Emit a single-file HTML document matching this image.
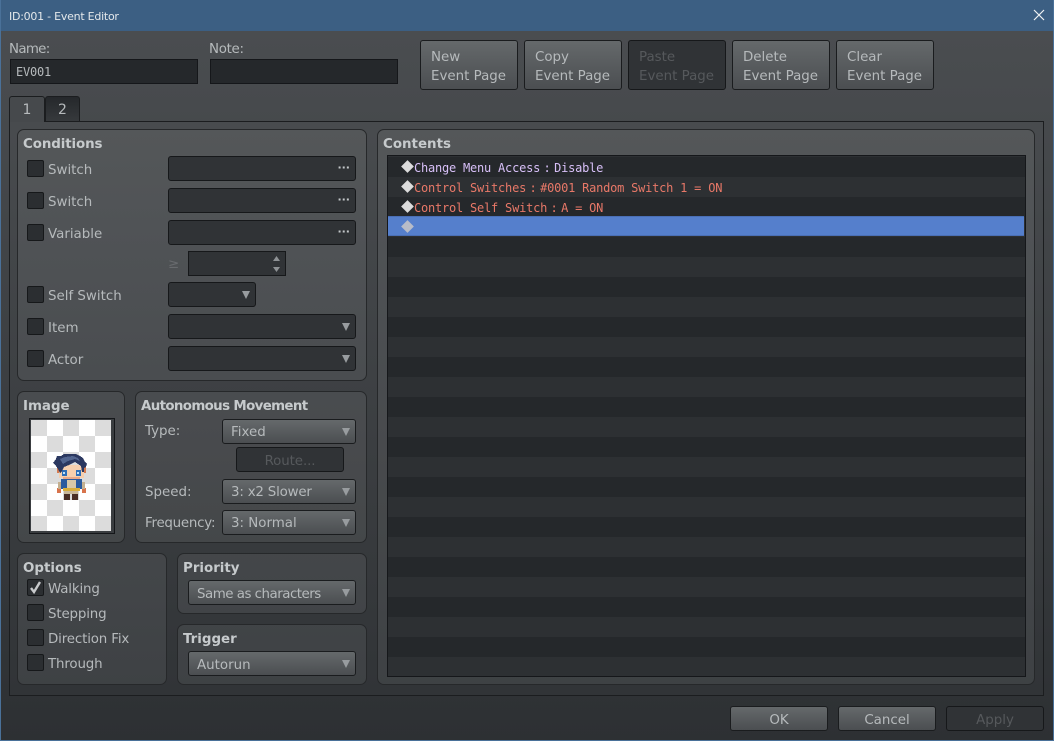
<!DOCTYPE html>
<html><head><meta charset="utf-8"><style>
html,body{margin:0;padding:0;width:1054px;height:741px;overflow:hidden;background:#2d3033}
*{box-sizing:border-box}
body{font-family:"DejaVu Sans","Liberation Sans",sans-serif;font-size:13.4px;color:#b6babc}
#w{position:absolute;left:0;top:0;width:1054px;height:741px;border:1px solid #4a7199;border-top:0;background:linear-gradient(#4a4d50 31px,#2d3033 741px);overflow:hidden}
.a,.t,.p,.b,.c,.d,.k,.i{position:absolute}
.t{white-space:nowrap;line-height:18px;height:18px;margin-top:2px}
.h{font-weight:bold;color:#c6cacc;font-size:13.4px}
.bar{position:absolute;left:-1px;top:0;width:1054px;height:31px;background:#3c5f83}
.p{border:1px solid #26282a;border-radius:7px;background:rgba(255,255,255,.065)}
.i{background:#25282b;border:1px solid #15171a;height:25px}
.d{background:#303336;border:1px solid #16181a;border-radius:3px;height:25px}
.b{border:1px solid #1a1c1e;border-radius:3px;background:linear-gradient(#65696b,#4b4e51);height:25px;color:#b6babc;padding:0 8px;white-space:nowrap}
.b.off,.off{background:#303336!important;color:#56595c!important;border-color:#16181a}
.bg{height:50px;width:98px;padding:6px 10px;line-height:19px;font-size:13.4px}
.bg span{display:block;height:19px}
.bg span:first-child{margin-top:1px}
.k{width:17px;height:17px;background:#2b2e31;border:1px solid #16181a;border-radius:2px}
.ar{position:absolute;width:0;height:0;border-left:4.5px solid transparent;border-right:4.5px solid transparent;border-top:8px solid #989c9f;right:5px;top:8px}
.dots{position:absolute;right:5px;top:1px;font-size:11px;color:#c4c8ca;line-height:20px;font-weight:bold}
.bt{line-height:25px}
.bt2{line-height:27px}
.o{letter-spacing:-.15px}
.r{position:absolute;left:0;width:636px;height:20px}
.m{position:absolute;left:26px;font-family:"DejaVu Sans Mono","Liberation Mono",monospace;font-size:12px;line-height:20px;letter-spacing:-.22px;white-space:pre}
.m b{display:inline-block;width:14px;font-weight:normal;text-align:center;letter-spacing:0}
.dm{position:absolute;left:15px;width:9px;height:9px;background:#dcdcdc;transform:rotate(45deg)}
</style></head><body><div id="w">
<div class="bar"></div>
<div class="t" style="left:8px;top:6px;font-size:11px;letter-spacing:-.25px;color:#e4e8eb">ID:001 - Event Editor</div>
<svg class="a" style="left:1031px;top:8px" width="14" height="14"><path d="M2 2L12 12M12 2L2 12" stroke="#f0f3f5" stroke-width="1.2" fill="none"/></svg>

<div class="t" style="left:8px;top:39px;letter-spacing:-.7px">Name:</div>
<div class="t" style="left:208px;top:39px;letter-spacing:-.3px">Note:</div>
<div class="i" style="left:9px;top:59px;width:188px;font-family:'DejaVu Sans Mono',monospace;font-size:12px;line-height:25px;padding-left:5px;letter-spacing:-.22px">EV001</div>
<div class="i" style="left:209px;top:59px;width:188px"></div>

<div class="b bg" style="left:419px;top:40px"><span>New</span><span>Event Page</span></div>
<div class="b bg" style="left:523px;top:40px"><span>Copy</span><span>Event Page</span></div>
<div class="b bg off" style="left:627px;top:40px"><span>Paste</span><span>Event Page</span></div>
<div class="b bg" style="left:731px;top:40px"><span>Delete</span><span>Event Page</span></div>
<div class="b bg" style="left:835px;top:40px"><span>Clear</span><span>Event Page</span></div>

<!-- tab pane -->
<div class="a" style="left:8px;top:121px;width:1035px;height:575px;border:1px solid #1b1d1f;background:rgba(255,255,255,.012)"></div>
<div class="a" style="left:8px;top:96px;width:36px;height:26px;background:#46494c;border:1px solid #1b1d1f;border-bottom:0;border-radius:3px 3px 0 0;text-align:center;line-height:27px;font-size:14px">1</div>
<div class="a" style="left:44px;top:96px;width:35px;height:25px;background:linear-gradient(#25282b,#36393c);border:1px solid #1b1d1f;border-bottom:0;border-radius:3px 3px 0 0;text-align:center;line-height:27px;font-size:14px">2</div>

<!-- conditions -->
<div class="p" style="left:16px;top:129px;width:350px;height:252px"></div>
<div class="t h" style="left:22px;top:134px;letter-spacing:-.1px">Conditions</div>
<div class="k" style="left:26px;top:160px"></div><div class="t" style="left:47px;top:160px">Switch</div>
<div class="d" style="left:167px;top:156px;width:188px"><span class="dots">···</span></div>
<div class="k" style="left:26px;top:192px"></div><div class="t" style="left:47px;top:192px">Switch</div>
<div class="d" style="left:167px;top:188px;width:188px"><span class="dots">···</span></div>
<div class="k" style="left:26px;top:224px"></div><div class="t" style="left:47px;top:224px">Variable</div>
<div class="d" style="left:167px;top:220px;width:188px"><span class="dots">···</span></div>
<div class="t" style="left:167px;top:254px;color:#686b6e">≥</div>
<div class="d" style="left:187px;top:251px;width:98px;border-radius:0"><svg class="a" style="left:83px;top:2px" width="10" height="20"><path d="M1 7L4.500 2L8 7ZM1 13L8 13L4.500 18Z" fill="#8e9295"/></svg></div>
<div class="k" style="left:26px;top:286px"></div><div class="t" style="left:47px;top:286px">Self Switch</div>
<div class="d" style="left:167px;top:282px;width:88px"><i class="ar"></i></div>
<div class="k" style="left:26px;top:318px"></div><div class="t" style="left:47px;top:318px">Item</div>
<div class="d" style="left:167px;top:314px;width:188px"><i class="ar"></i></div>
<div class="k" style="left:26px;top:350px"></div><div class="t" style="left:47px;top:350px">Actor</div>
<div class="d" style="left:167px;top:346px;width:188px"><i class="ar"></i></div>

<!-- image -->
<div class="p" style="left:16px;top:391px;width:108px;height:152px"></div>
<div class="t h" style="left:22px;top:396px">Image</div>
<div class="a" style="left:28px;top:418px;width:86px;height:116px;background:#3a3d40;border:1px solid #15171a"></div>
<svg class="a" style="left:30px;top:420px" width="80" height="111" shape-rendering="crispEdges">
<rect width="80" height="111" fill="#fff"/>
<g fill="#dcdcdc">
<rect x="0" y="0" width="16" height="16"/><rect x="32" y="0" width="16" height="16"/><rect x="64" y="0" width="16" height="16"/>
<rect x="16" y="16" width="16" height="16"/><rect x="48" y="16" width="16" height="16"/>
<rect x="0" y="32" width="16" height="16"/><rect x="32" y="32" width="16" height="16"/><rect x="64" y="32" width="16" height="16"/>
<rect x="16" y="48" width="16" height="16"/><rect x="48" y="48" width="16" height="16"/>
<rect x="0" y="64" width="16" height="16"/><rect x="32" y="64" width="16" height="16"/><rect x="64" y="64" width="16" height="16"/>
<rect x="16" y="80" width="16" height="16"/><rect x="48" y="80" width="16" height="16"/>
<rect x="0" y="96" width="16" height="15"/><rect x="32" y="96" width="16" height="15"/><rect x="64" y="96" width="16" height="15"/>
</g>
<!-- sprite -->
<rect x="33" y="73" width="6" height="7" fill="#4a2e26"/><rect x="41" y="73" width="6" height="7" fill="#4a2e26"/>
<rect x="33" y="71" width="14" height="3" fill="#c9b79a"/>
<rect x="26" y="68" width="4" height="5" fill="#d8734c"/><rect x="51" y="68" width="4" height="5" fill="#d8734c"/>
<rect x="27" y="62" width="5" height="7" fill="#c4b090"/><rect x="49" y="62" width="5" height="7" fill="#c4b090"/>
<rect x="30" y="59" width="21" height="10" fill="#2a5a9e"/>
<rect x="36" y="60" width="9" height="8" fill="#d8c8a8"/>
<rect x="32" y="68" width="17" height="3" fill="#d9ae3c"/>
<rect x="26" y="47" width="3" height="6" fill="#d57a50"/><rect x="52" y="47" width="3" height="6" fill="#d57a50"/>
<rect x="28" y="45" width="25" height="13" fill="#f6cfae"/>
<rect x="32" y="57" width="17" height="2" fill="#e8a888"/>
<rect x="31" y="50" width="5" height="6" fill="#2e6fb8"/><rect x="45" y="50" width="5" height="6" fill="#2e6fb8"/>
<rect x="32" y="52" width="2" height="2" fill="#bfe0f5"/><rect x="46" y="52" width="2" height="2" fill="#bfe0f5"/>
<path d="M22 43L25 39L26 36L30 36L33 34H45L49 36L52 38L54 42L56 44L55 47L53 48V52H51L50 46L44 42L38 45L33 47L31 51L29 53L27 49L25 46Z" fill="#2b3860"/>
<path d="M29 39L34 37L42 36L47 38L49 41L44 39L37 41L32 44Z" fill="#52658f"/>
</svg>

<!-- autonomous -->
<div class="p" style="left:134px;top:391px;width:232px;height:152px"></div>
<div class="t h" style="left:140px;top:396px;letter-spacing:-.65px">Autonomous Movement</div>
<div class="t" style="left:144px;top:421px">Type:</div>
<div class="b bt" style="left:221px;top:419px;width:134px">Fixed<i class="ar"></i></div>
<div class="b bt2 off" style="left:235px;top:447px;width:108px;text-align:center;letter-spacing:-.1px">Route...</div>
<div class="t" style="left:144px;top:482px">Speed:</div>
<div class="b bt" style="left:221px;top:479px;width:134px;letter-spacing:-.2px">3: x2 Slower<i class="ar"></i></div>
<div class="t" style="left:144px;top:513px;letter-spacing:-.25px">Frequency:</div>
<div class="b bt" style="left:221px;top:510px;width:134px">3: Normal<i class="ar"></i></div>

<!-- options -->
<div class="p" style="left:16px;top:553px;width:150px;height:132px"></div>
<div class="t h" style="left:22px;top:558px">Options</div>
<div class="k" style="left:26px;top:579px"></div>
<svg class="a" style="left:27px;top:580px" width="15" height="15"><path d="M3 8L6 12L12 2" fill="none" stroke="#c8cacc" stroke-width="2.400"/></svg>
<div class="t o" style="left:47px;top:579px">Walking</div>
<div class="k" style="left:26px;top:604px"></div><div class="t o" style="left:47px;top:604px">Stepping</div>
<div class="k" style="left:26px;top:629px"></div><div class="t o" style="left:47px;top:629px">Direction Fix</div>
<div class="k" style="left:26px;top:654px"></div><div class="t o" style="left:47px;top:654px">Through</div>

<!-- priority/trigger -->
<div class="p" style="left:176px;top:553px;width:190px;height:61px"></div>
<div class="t h" style="left:182px;top:558px">Priority</div>
<div class="b bt2" style="left:187px;top:580px;width:168px;letter-spacing:-.5px">Same as characters<i class="ar"></i></div>
<div class="p" style="left:176px;top:624px;width:190px;height:61px"></div>
<div class="t h" style="left:182px;top:629px">Trigger</div>
<div class="b bt2" style="left:187px;top:651px;width:168px">Autorun<i class="ar"></i></div>

<!-- contents -->
<div class="p" style="left:376px;top:129px;width:658px;height:556px"></div>
<div class="t h" style="left:382px;top:134px">Contents</div>
<div class="a" style="left:386px;top:155px;width:639px;height:522px;border:1px solid #15171a;background:repeating-linear-gradient(#25282b 0,#25282b 20px,#2d3033 20px,#2d3033 40px);background-position:0 1px">
<div class="r" style="top:60px;background:#557fcc;height:20px;border-top:1px solid #4a6fb5;border-bottom:1px solid #4a6fb5"></div>
<div class="dm" style="top:6px"></div><div class="m" style="top:2px;color:#d8c0f8">Change Menu Access<b>:</b>Disable</div>
<div class="dm" style="top:26px"></div><div class="m" style="top:22px;color:#e87868">Control Switches<b>:</b>#0001 Random Switch 1 = ON</div>
<div class="dm" style="top:46px"></div><div class="m" style="top:42px;color:#e87868">Control Self Switch<b>:</b>A = ON</div>
<div class="dm" style="top:66px;background:#b8bcc8"></div>
</div>

<div class="b bt2" style="left:729px;top:706px;width:98px;text-align:center">OK</div>
<div class="b bt2" style="left:837px;top:706px;width:98px;text-align:center">Cancel</div>
<div class="b bt2 off" style="left:945px;top:706px;width:98px;text-align:center">Apply</div>
</div></body></html>
